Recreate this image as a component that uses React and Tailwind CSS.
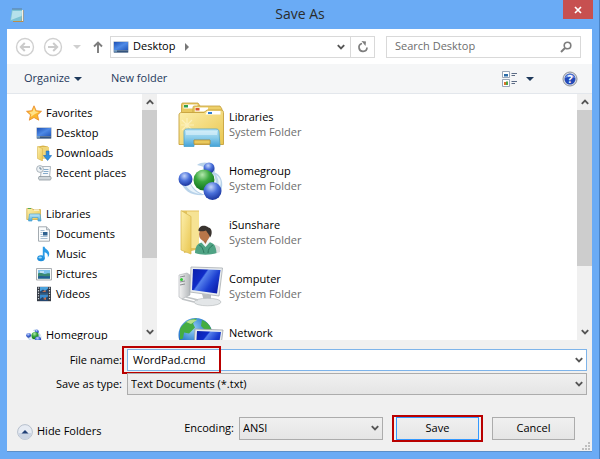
import { useState } from 'react';

const Svg = ({ size = 16, box = 16, children, className = '' }) => (
  <svg width={size} height={size} viewBox={`0 0 ${box} ${box}`} className={`shrink-0 ${className}`} aria-hidden="true">
    {children}
  </svg>
);

// Gradients shared by all the icons
const IconDefs = () => (
  <svg width="0" height="0" className="absolute" aria-hidden="true">
    <defs>
      <linearGradient id="screen" x1="0" y1="0" x2="1" y2="1">
        <stop offset="0" stopColor="#1c4fb4" />
        <stop offset="0.5" stopColor="#4e8ae6" />
        <stop offset="1" stopColor="#2358bb" />
      </linearGradient>
      <linearGradient id="deep" x1="0" y1="0" x2="1" y2="0.6">
        <stop offset="0" stopColor="#0a1fa8" />
        <stop offset="0.4" stopColor="#0f2cc8" />
        <stop offset="0.45" stopColor="#5580ec" />
        <stop offset="0.75" stopColor="#1c3fd0" />
        <stop offset="1" stopColor="#0e22b0" />
      </linearGradient>
      <linearGradient id="folder" x1="0" y1="0" x2="1" y2="1">
        <stop offset="0" stopColor="#fdf0ae" />
        <stop offset="1" stopColor="#e9c64f" />
      </linearGradient>
      <linearGradient id="stand" x1="0" y1="0" x2="0" y2="1">
        <stop offset="0" stopColor="#c4e8f6" />
        <stop offset="0.5" stopColor="#8accea" />
        <stop offset="1" stopColor="#45a3d8" />
      </linearGradient>
      <linearGradient id="metal" x1="0" y1="0" x2="1" y2="0">
        <stop offset="0" stopColor="#f4f4f4" />
        <stop offset="1" stopColor="#b4b8bb" />
      </linearGradient>
      <radialGradient id="blueBall" cx="0.42" cy="0.28" r="0.72">
        <stop offset="0" stopColor="#c3d4fa" />
        <stop offset="0.5" stopColor="#4a70da" />
        <stop offset="1" stopColor="#1b369f" />
      </radialGradient>
      <radialGradient id="greenBall" cx="0.42" cy="0.25" r="0.75">
        <stop offset="0" stopColor="#b4e8ae" />
        <stop offset="0.45" stopColor="#3aa83f" />
        <stop offset="1" stopColor="#0f701b" />
      </radialGradient>
      <radialGradient id="globe" cx="0.4" cy="0.3" r="0.7">
        <stop offset="0" stopColor="#9bd3f6" />
        <stop offset="0.6" stopColor="#2f7fd0" />
        <stop offset="1" stopColor="#164a94" />
      </radialGradient>
    </defs>
  </svg>
);

const NotepadIcon = () => (
  <Svg>
    <path d="M4 3h10.500v12H4z" fill="#b98c4c" />
    <path d="M3 2.500h10.500L12.500 14H1z" fill="#7cc3d4" />
    <path d="M3.500 4h9.500l-.5 5L2 13z" fill="#b5e1eb" />
    <path d="M3.500 2h10" stroke="#56707c" strokeWidth="1.500" strokeDasharray="1 1" />
    <path d="M13.500 3v11" stroke="#f6efdc" />
  </Svg>
);

const DesktopIcon = () => (
  <Svg>
    <path d="M0.500 2.500h15v11h-15z" fill="#8a9cb4" />
    <path d="M1 3h14v8H1z" fill="url(#screen)" />
    <path d="M1 11.500h14v2H1z" fill="#34547d" />
    <path d="M1 12h3" stroke="#8ec2ea" />
  </Svg>
);

const StarIcon = () => (
  <Svg>
    <path d="M8 .8l2.200 4.900 5.300.6-4 3.600 1.200 5.300L8 12.500l-4.700 2.700 1.200-5.300-4-3.600 5.300-.6z" fill="#fbb62d" stroke="#e8892a" strokeWidth=".8" strokeLinejoin="round" />
    <path d="M8 2.800l1.500 3.700 3.500.4-4 2L4.500 12l1-2.600L3 7l3.500-.5z" fill="#ffe28a" />
  </Svg>
);

const DownloadsIcon = () => (
  <Svg>
    <path d="M2 1.500l5-1 5 1v12H2z" fill="#d9b44a" />
    <path d="M4.500 2H13v11.500H4.500z" fill="#f0d67a" />
    <path d="M1.500 1.500l5 2V16l-5-2.500z" fill="url(#folder)" stroke="#d8b64e" strokeWidth=".6" />
    <path d="M10.200 6h2.800v4.500h2.600L11.600 15.500 7.500 10.500h2.700z" fill="#2e8fe0" stroke="#1a69b8" strokeWidth=".6" />
  </Svg>
);

const RecentIcon = () => (
  <Svg>
    <path d="M5.500 1.500h9l-1 11h-9z" fill="#f5f8fa" stroke="#9aa5ad" strokeWidth=".8" />
    <path d="M7.500 4.500h5M7.500 6.500h5M7 8.500h5" stroke="#7aa3c4" strokeWidth=".9" />
    <path d="M3 11.500h11.500c1 1 .8 3-.3 3.500H3.500C2.500 14.500 2 13 3 11.500z" fill="#cfd6da" stroke="#808b92" strokeWidth=".7" />
    <circle cx="4" cy="4" r="3.400" fill="#edf2f5" stroke="#9aa5ad" strokeWidth=".8" />
    <path d="M4 2v2h1.800" stroke="#4e6c85" strokeWidth=".8" fill="none" />
  </Svg>
);

const LibrariesSmall = () => (
  <Svg>
    <path d="M.8 2.500h5l1.200 1h7.500v10H.8z" fill="url(#folder)" stroke="#d1ad49" strokeWidth=".8" />
    <path d="M2 2.500h3" stroke="#53ae55" />
    <path d="M8 4h5" stroke="#fff" />
    <path d="M3.500 8h10.500l1 7h-3v-3.500H6V15H2.500z" fill="url(#stand)" stroke="#4ba4d3" strokeWidth=".7" />
  </Svg>
);

const DocumentsIcon = () => (
  <Svg>
    <path d="M2.500.8h8l3 3v11.400h-11z" fill="#fafcfd" stroke="#9aa2a8" strokeWidth=".9" />
    <path d="M10.500.8v3h3" fill="#d7dde1" stroke="#9aa2a8" strokeWidth=".8" />
    <path d="M4.500 4.500h4M4.500 6.500h2M4.500 8.500h2M4.500 10.500h7M4.500 12.500h7" stroke="#9bb6ce" strokeWidth=".9" />
    <path d="M7 6h4.500v3.500H7z" fill="#2f6291" />
  </Svg>
);

const MusicIcon = () => (
  <Svg>
    <ellipse cx="5" cy="12.200" rx="3.800" ry="3" fill="#1f8fdc" />
    <path d="M6.800 12V.8h1.800c.3 2.700 5 3.200 4.600 7.700-.2 1.500-.8 2.200-1.500 2.900.7-3-1-4.700-3.100-5.200V12z" fill="#2b9be6" />
    <ellipse cx="4.200" cy="11.400" rx="1.800" ry="1" fill="#9bd7f8" />
  </Svg>
);

const PicturesIcon = () => (
  <Svg>
    <path d="M.5 2.500h15v11.500H.5z" fill="#f7f8f8" stroke="#a0a6aa" strokeWidth=".9" />
    <path d="M2 4h12v8.500H2z" fill="#7fc3ec" />
    <path d="M2 7.500c3-1.800 5 .8 7 .4s3-1 5-.5v5.100H2z" fill="#3b8a72" />
    <path d="M2 10.500c4-1.500 8 .5 12-.5v2.500H2z" fill="#235e94" />
    <path d="M4 6h4" stroke="#fff" />
  </Svg>
);

const VideosIcon = () => (
  <Svg>
    <path d="M1 .8h14v14.400H1z" fill="#343b45" />
    <path d="M4 1h8v6.500H4z" fill="#4aa1dc" />
    <path d="M4 8.500h8V15H4z" fill="#3b8bcf" />
    <path d="M4 5.500l3-2 2 1.500 3-2.500v5H4zM4 13l2.500-2 2 1.500 3.500-2V15H4z" fill="#25466f" />
    <path d="M6 6l3-2 1 2zM7 13l3-2v3z" fill="#c3704a" />
    <path d="M2.500 1.500v13M13.500 1.500v13" stroke="#d3d8dd" strokeWidth="1.200" strokeDasharray="1.300 1.300" />
  </Svg>
);

const Balls = ({ size }) => (
  <Svg size={size} box={46}>
    <path d="M3 27c3 9 10 14 24 13-8-3-12-7-15-13zM19 10c7-5 17-2 18 5 0 4-2 7-5 8 1-6-2-11-13-13zM35 17c9 2 11 12 8 19-2 3-5 4-9 4 5-6 5-13 1-23z" fill="#b9d3ea" />
    <path d="M7 29c3 6 8 9 15 10-6-3-8-6-10-11zM38 20c6 3 6 10 2 15 1-7 1-10-2-15z" fill="#e8f3fb" />
    <circle cx="31" cy="13" r="5.500" fill="url(#blueBall)" />
    <circle cx="7.500" cy="24" r="7" fill="url(#blueBall)" />
    <circle cx="26" cy="25" r="10.500" fill="url(#greenBall)" />
    <circle cx="34.500" cy="36" r="9" fill="url(#blueBall)" />
  </Svg>
);

const HomegroupSmall = () => <Balls size={16} />;
const HomegroupLarge = () => <Balls size={46} />;

const LibrariesLarge = () => (
  <Svg size={46} box={46}>
    <path d="M3.500 3.500c0-1 .5-1.500 1.500-1.500h15l2 3v37H3.500z" fill="#e9c95f" stroke="#c49e3a" strokeWidth=".8" />
    <path d="M5.500 3.500h14v4h-14z" fill="#fff" />
    <path d="M6 4h4v2.500H6z" fill="#31a04c" />
    <path d="M15 6.500c0-1 .5-1.500 1.500-1.500H42l2 3v34H15z" fill="#edcf69" stroke="#c49e3a" strokeWidth=".8" />
    <path d="M17 6.500h13v4H17z" fill="#fff" />
    <path d="M17.500 7h4v2.500h-4z" fill="#d9542c" />
    <path d="M1 14c0-1.500 1-2.500 2.500-2.500H26L29 9h14c1.500 0 2.500 1 2.500 2.500v32H1z" fill="url(#folder)" stroke="#c6a13c" strokeWidth=".9" />
    <path d="M29.500 10h13v3.500h-15z" fill="#fff" />
    <path d="M30 11h4v2h-4z" fill="#2f7fd4" />
    <path d="M9 17v14M3 24h13M4 19l10 10M14 19L4 29" stroke="#fff8d4" strokeWidth="1.200" opacity=".6" />
    <path d="M6 31c0-2 1-3 3-3h29c2 0 3 1 3 3l1 14.500H32V39H16v6.500H6z" fill="url(#stand)" stroke="#4aa2cf" strokeWidth=".8" />
    <path d="M8 30h31v4H8z" fill="#dff4fb" opacity=".6" />
    <path d="M16 39h16v4H16z" fill="#eac95c" stroke="#bd943c" strokeWidth=".8" />
  </Svg>
);

const UserFolder = () => (
  <Svg size={46} box={46}>
    <path d="M20 38c8-4 17-4 22 0v5c-6 3-16 3-22 0z" fill="#e0e0e0" />
    <path d="M4 1.500h17V40L6 44z" fill="#e3c25c" />
    <path d="M9 2.500h12V39H9z" fill="#f6e394" />
    <path d="M3 1.500l10 6V45L3 41z" fill="url(#folder)" stroke="#d6b64f" strokeWidth=".7" />
    <path d="M17 44c0-7 3-10 8-11h6c5 1 7 4 7.500 11-6 2-15 2.500-21.500 0z" fill="#4fa384" />
    <path d="M23 33l4.500 5 4.500-5-2-4h-4z" fill="#f3f6f4" />
    <path d="M24 30h6l-2.500 5z" fill="#a9683f" />
    <ellipse cx="26.500" cy="25" rx="5.500" ry="7" fill="#b87649" />
    <path d="M20.500 22c-.5-5 6-7 10-3.500 4 1 4 7 1.500 10-1-3-2-4-4-7-3 1-5.500 1-7.500.5z" fill="#39332f" />
    <path d="M21 36c3 1 4 4 5 8M35 36c-3 2-5 4-5 8" stroke="#2f7a60" fill="none" />
  </Svg>
);

const ComputerIcon = () => (
  <Svg size={46} box={46}>
    <path d="M1 12l8-2 3 2v20L4 36l-3-2z" fill="url(#metal)" stroke="#a9adb1" strokeWidth=".6" />
    <path d="M2 14l5-1M2 19l5-1M2 22l5-1" stroke="#8a8e91" />
    <circle cx="3.500" cy="16.500" r="1.500" fill="#2fc932" />
    <path d="M24 31l9 1v6h-7z" fill="#b9bdc0" />
    <ellipse cx="29.500" cy="39" rx="13.500" ry="3.800" fill="#e3e6e8" stroke="#aeb3b6" strokeWidth=".6" />
    <path d="M13 4l31.500 1L41 33l-29-4z" fill="#e9edef" stroke="#a8adb1" strokeWidth=".8" />
    <path d="M15 6l27.500 1L39 30.500 14 27z" fill="url(#deep)" />
    <path d="M4 36l12 3M8 34l12 3" stroke="#c0c4c6" strokeWidth="1.600" />
  </Svg>
);

const NetworkIcon = () => (
  <Svg size={46} box={46}>
    <circle cx="17.500" cy="18" r="17" fill="url(#globe)" />
    <path d="M2 12C6 5 12 2 19 1.500l-4 5 2 4-6 6-5-1-1 6-3 1zM24 3c6 2 9 7 10 12l-6-1-5-5zM4 26l7 1 2 7-3 1c-3-2-5-5-6-9z" fill="#44ad42" />
    <path d="M8 5c4-3 8-3 11-2l-6 4z" fill="#b2e08c" />
    <path d="M17 12l28 1-3 23-26-4z" fill="#e9edef" stroke="#9da3a8" strokeWidth=".8" />
    <path d="M19 14l24 1-3 18-22-3z" fill="url(#deep)" />
  </Svg>
);

const ViewIcon = () => (
  <Svg>
    <path d="M.5.5h7v6h-7zM.5 8.500h7v7h-7z" fill="#fff" stroke="#8f9db0" strokeWidth=".9" />
    <path d="M2 3h4v2.500H2z" fill="#2c6ca8" />
    <path d="M2 11h2v3H2z" fill="#d9732e" />
    <path d="M4 10.500h2V14H4z" fill="#4fa547" />
    <path d="M9.500 2.500H15M9.500 4.500H13M9.500 10.500H15M9.500 12.500H13" stroke="#5b6b85" />
  </Svg>
);

const HelpIcon = () => (
  <Svg>
    <circle cx="8" cy="8" r="7" fill="#d9dce2" stroke="#8d929c" />
    <circle cx="8" cy="8" r="5.500" fill="#2349b8" />
    <path d="M2.900 7a5.300 5.300 0 0110.200 0c-3-1.500-7-1.500-10.200 0z" fill="#6f93e6" />
    <text x="8" y="12" textAnchor="middle" fontSize="11" fontWeight="700" fill="#fff" fontFamily="Open Sans, sans-serif">?</text>
  </Svg>
);

const Chevron = ({ up, className = '' }) => (
  <svg width="8" height="6" viewBox="0 0 8 6" className={`shrink-0 ${up ? 'rotate-180' : ''} ${className}`} aria-hidden="true">
    <path d="M.8 1.200L4 4.400 7.200 1.200" fill="none" stroke="#555" strokeWidth="1.900" />
  </svg>
);

const Triangle = ({ fill }) => (
  <svg width="8" height="4" viewBox="0 0 8 4" className="shrink-0" aria-hidden="true">
    <path d="M0 0h8L4 4z" fill={fill} />
  </svg>
);

const RoundArrow = ({ flip }) => (
  <Svg size={20} box={20} className={flip ? 'rotate-180' : ''}>
    <circle cx="10" cy="10" r="8.500" fill="#fff" stroke="#d0d0d0" strokeWidth="1.400" />
    <path d="M15 10H6M9.800 6L5.800 10l4 4" fill="none" stroke="#cbcbcb" strokeWidth="2" />
  </Svg>
);

const treeGroups = [
  {
    name: 'Favorites',
    Icon: StarIcon,
    items: [
      { name: 'Desktop', Icon: DesktopIcon },
      { name: 'Downloads', Icon: DownloadsIcon },
      { name: 'Recent places', Icon: RecentIcon },
    ],
  },
  {
    name: 'Libraries',
    Icon: LibrariesSmall,
    items: [
      { name: 'Documents', Icon: DocumentsIcon },
      { name: 'Music', Icon: MusicIcon },
      { name: 'Pictures', Icon: PicturesIcon },
      { name: 'Videos', Icon: VideosIcon },
    ],
  },
  { name: 'Homegroup', Icon: HomegroupSmall, items: [] },
];

const folders = [
  { name: 'Libraries', Icon: LibrariesLarge },
  { name: 'Homegroup', Icon: HomegroupLarge },
  { name: 'iSunshare', Icon: UserFolder },
  { name: 'Computer', Icon: ComputerIcon },
  { name: 'Network', Icon: NetworkIcon },
];

function ScrollBar({ thumb }) {
  return (
    <div className="flex w-[15px] shrink-0 flex-col bg-[#f0f0f0]">
      <button type="button" aria-label="Scroll up" className="flex h-4 items-center justify-center">
        <Chevron up />
      </button>
      <div className="flex-1">
        <div className="bg-[#cdcdcd]" style={{ height: `${thumb}%` }} />
      </div>
      <button type="button" aria-label="Scroll down" className="flex h-4 items-center justify-center">
        <Chevron />
      </button>
    </div>
  );
}

function Sidebar() {
  return (
    <nav className="flex w-[150px] shrink-0">
      <div className="flex min-w-0 flex-1 flex-col gap-[21px] overflow-hidden pt-[9px] pl-[19px]">
        {treeGroups.map(({ name, Icon, items }) => (
          <div key={name}>
            <a href="#" className="flex h-5 items-center gap-1 whitespace-nowrap">
              <Icon />
              {name}
            </a>
            {items.map((item) => (
              <a key={item.name} href="#" className="flex h-5 items-center gap-1 pl-[10px] whitespace-nowrap">
                <item.Icon />
                {item.name}
              </a>
            ))}
          </div>
        ))}
      </div>
      <ScrollBar thumb={69} />
    </nav>
  );
}

function FolderList() {
  return (
    <div className="flex min-w-0 flex-1">
      <div className="min-w-0 flex-1 overflow-hidden pt-[3px] pl-[21px]">
        {folders.map(({ name, Icon }) => (
          <a key={name} href="#" className="flex h-[54px] items-center gap-[5px]">
            <Icon />
            <span className="leading-[15px]">
              {name}
              <span className="block text-[#6d6d6d]">System Folder</span>
            </span>
          </a>
        ))}
      </div>
      <ScrollBar thumb={73} />
    </div>
  );
}

export default function App() {
  const [fileName, setFileName] = useState('WordPad.cmd');
  const [type, setType] = useState('txt');
  const [encoding, setEncoding] = useState('ANSI');
  const [query, setQuery] = useState('');

  return (
    <div className="flex h-screen flex-col border-r border-[#4a83c6] bg-[#6aabf5] pr-[7px] pb-[7px] pl-[7px] font-['Open_Sans','Noto_Sans',sans-serif] text-[11px] text-black">
      <IconDefs />

      <header className="flex h-[29px] shrink-0 items-center pl-[2px]">
        <div className="w-7">
          <NotepadIcon />
        </div>
        <h1 className="flex-1 pb-px text-center text-sm text-[#2b2b2b]">Save As</h1>
        <button type="button" aria-label="Close" className="mr-[-1px] flex h-[19px] w-[30px] items-center justify-center self-start bg-[#c75050]">
          <svg width="8" height="8" viewBox="0 0 8 8" aria-hidden="true">
            <path d="M1 1l6 6M7 1L1 7" stroke="#fff" strokeWidth="1.700" />
          </svg>
        </button>
      </header>

      <form onSubmit={(e) => e.preventDefault()} className="flex min-h-0 flex-1 flex-col border-b border-[#5b8fc9] bg-[#f0f0f0]">
        <div className="flex h-[35px] shrink-0 items-center bg-white pr-[11px] pl-2">
          <button type="button" aria-label="Back"><RoundArrow /></button>
          <button type="button" aria-label="Forward" className="ml-2"><RoundArrow flip /></button>
          <button type="button" aria-label="Recent locations" className="ml-2.5"><Triangle fill="#cfcfcf" /></button>
          <button type="button" aria-label="Up" className="ml-[11px]">
            <svg width="12" height="14" viewBox="0 0 12 14" aria-hidden="true">
              <path d="M6 13V3M2 6.500l4-4 4 4" fill="none" stroke="#7d7d7d" strokeWidth="1.900" />
            </svg>
          </button>
          <div className="ml-1.5 flex h-[22px] min-w-0 flex-1 items-center border border-[#d9d9d9] pl-[2px]">
            <DesktopIcon />
            <span className="ml-1">Desktop</span>
            <svg width="4" height="8" viewBox="0 0 4 8" className="ml-2.5" aria-hidden="true">
              <path d="M0 0l4 4-4 4z" fill="#777" />
            </svg>
            <button type="button" aria-label="Previous locations" className="ml-auto pr-[5px]"><Chevron /></button>
            <button type="button" aria-label="Refresh" className="flex h-full w-6 items-center justify-center border-l border-[#d9d9d9]">
              <svg width="12" height="12" viewBox="0 0 12 12" aria-hidden="true">
                <path d="M5 2.500A4 4 0 1010 6.500" fill="none" stroke="#7d7d7d" strokeWidth="1.700" />
                <path d="M4.500 0l4.500.5-.5 4.500z" fill="#7d7d7d" />
              </svg>
            </button>
          </div>
          <div className="ml-[11px] flex h-[22px] w-[195px] items-center border border-[#d9d9d9] pr-2 pl-2">
            <input
              type="search"
              aria-label="Search Desktop"
              placeholder="Search Desktop"
              value={query}
              onChange={(e) => setQuery(e.target.value)}
              className="min-w-0 flex-1 outline-none placeholder:text-[#6d6d6d]"
            />
            <svg width="12" height="12" viewBox="0 0 12 12" aria-hidden="true">
              <circle cx="7.500" cy="4.500" r="3.300" fill="none" stroke="#7d7d7d" strokeWidth="1.600" />
              <path d="M5 7L1 11" stroke="#7d7d7d" strokeWidth="2" />
            </svg>
          </div>
        </div>

        <div className="flex h-[30px] shrink-0 items-center border-b border-[#e3e7ec] bg-[#f5f6f7] pr-[14px] pl-[17px] text-[#1e395b]">
          <button type="button" className="flex items-center gap-1">
            Organize
            <Triangle fill="#1e395b" />
          </button>
          <button type="button" className="ml-[29px]">New folder</button>
          <button type="button" aria-label="Change your view" className="ml-auto flex items-center gap-2">
            <ViewIcon />
            <Triangle fill="#1e395b" />
          </button>
          <button type="button" aria-label="Help" className="ml-7"><HelpIcon /></button>
        </div>

        <div className="flex min-h-0 flex-1 bg-white">
          <Sidebar />
          <FolderList />
        </div>

        <div className="shrink-0 pt-[9px] pr-[5px]">
          <div className="flex h-[22px] items-center">
            <label htmlFor="file-name" className="w-[120px] shrink-0 pr-[5px] text-right">File name:</label>
            <div className="relative flex h-full flex-1 items-center border border-[#7eb4ea] bg-white pr-[3px] pl-[5px]">
              <input
                id="file-name"
                value={fileName}
                onChange={(e) => setFileName(e.target.value)}
                className="min-w-0 flex-1 outline-none"
              />
              <button type="button" aria-label="Previous file names"><Chevron /></button>
              <div className="pointer-events-none absolute -top-1 -left-1.5 h-7 w-[99px] border-2 border-[#b90000]" />
            </div>
          </div>
          <div className="mt-[2px] flex h-[22px] items-center">
            <label htmlFor="save-type" className="w-[120px] shrink-0 pr-[5px] text-right">Save as type:</label>
            <div className="relative h-full flex-1">
              <select
                id="save-type"
                value={type}
                onChange={(e) => setType(e.target.value)}
                className="h-full w-full appearance-none border border-[#acacac] bg-linear-to-b from-[#f0f0f0] to-[#e5e5e5] pl-[3px]"
              >
                <option value="txt">Text Documents (*.txt)</option>
                <option value="all">All Files (*.*)</option>
              </select>
              <Chevron className="pointer-events-none absolute top-2 right-1" />
            </div>
          </div>

          <div className="mt-[22px] mb-[11px] flex h-[23px] items-center pr-3 pl-[10px]">
            <button type="button" className="mt-1.5 flex items-center gap-1">
              <Svg>
                <circle cx="8" cy="8" r="7.400" fill="#e6ebf3" stroke="#b7c0cd" />
                <path d="M1.500 9a6.500 6.500 0 0013 0z" fill="#cbd5e4" />
                <path d="M4.500 9.500L8 6l3.500 3.500z" fill="#1f3f77" />
              </Svg>
              Hide Folders
            </button>
            <label htmlFor="encoding" className="ml-auto">Encoding:</label>
            <div className="relative ml-[5px] h-full w-36">
              <select
                id="encoding"
                value={encoding}
                onChange={(e) => setEncoding(e.target.value)}
                className="h-full w-full appearance-none border border-[#acacac] bg-linear-to-b from-[#f0f0f0] to-[#e5e5e5] pl-[3px]"
              >
                <option>ANSI</option>
                <option>Unicode</option>
                <option>UTF-8</option>
              </select>
              <Chevron className="pointer-events-none absolute top-2 right-1" />
            </div>
            <div className="relative ml-[13px] h-full w-[83px]">
              <button type="submit" className="h-full w-full border border-[#3399ff] bg-linear-to-b from-[#f0f0f0] to-[#e5e5e5]">Save</button>
              <div className="pointer-events-none absolute -inset-x-1 -inset-y-[2px] border-2 border-[#b90000]" />
            </div>
            <button type="button" className="ml-[13px] h-full w-[83px] border border-[#acacac] bg-linear-to-b from-[#f0f0f0] to-[#e5e5e5]">Cancel</button>
          </div>
        </div>

        <svg width="8" height="8" viewBox="0 0 8 8" className="-mt-[9px] mr-[2px] mb-px shrink-0 self-end" aria-hidden="true">
          <path d="M6 0h2v2H6zM3 3h2v2H3zM6 3h2v2H6zM0 6h2v2H0zM3 6h2v2H3zM6 6h2v2H6z" fill="#bfbfbf" />
        </svg>
      </form>
    </div>
  );
}
